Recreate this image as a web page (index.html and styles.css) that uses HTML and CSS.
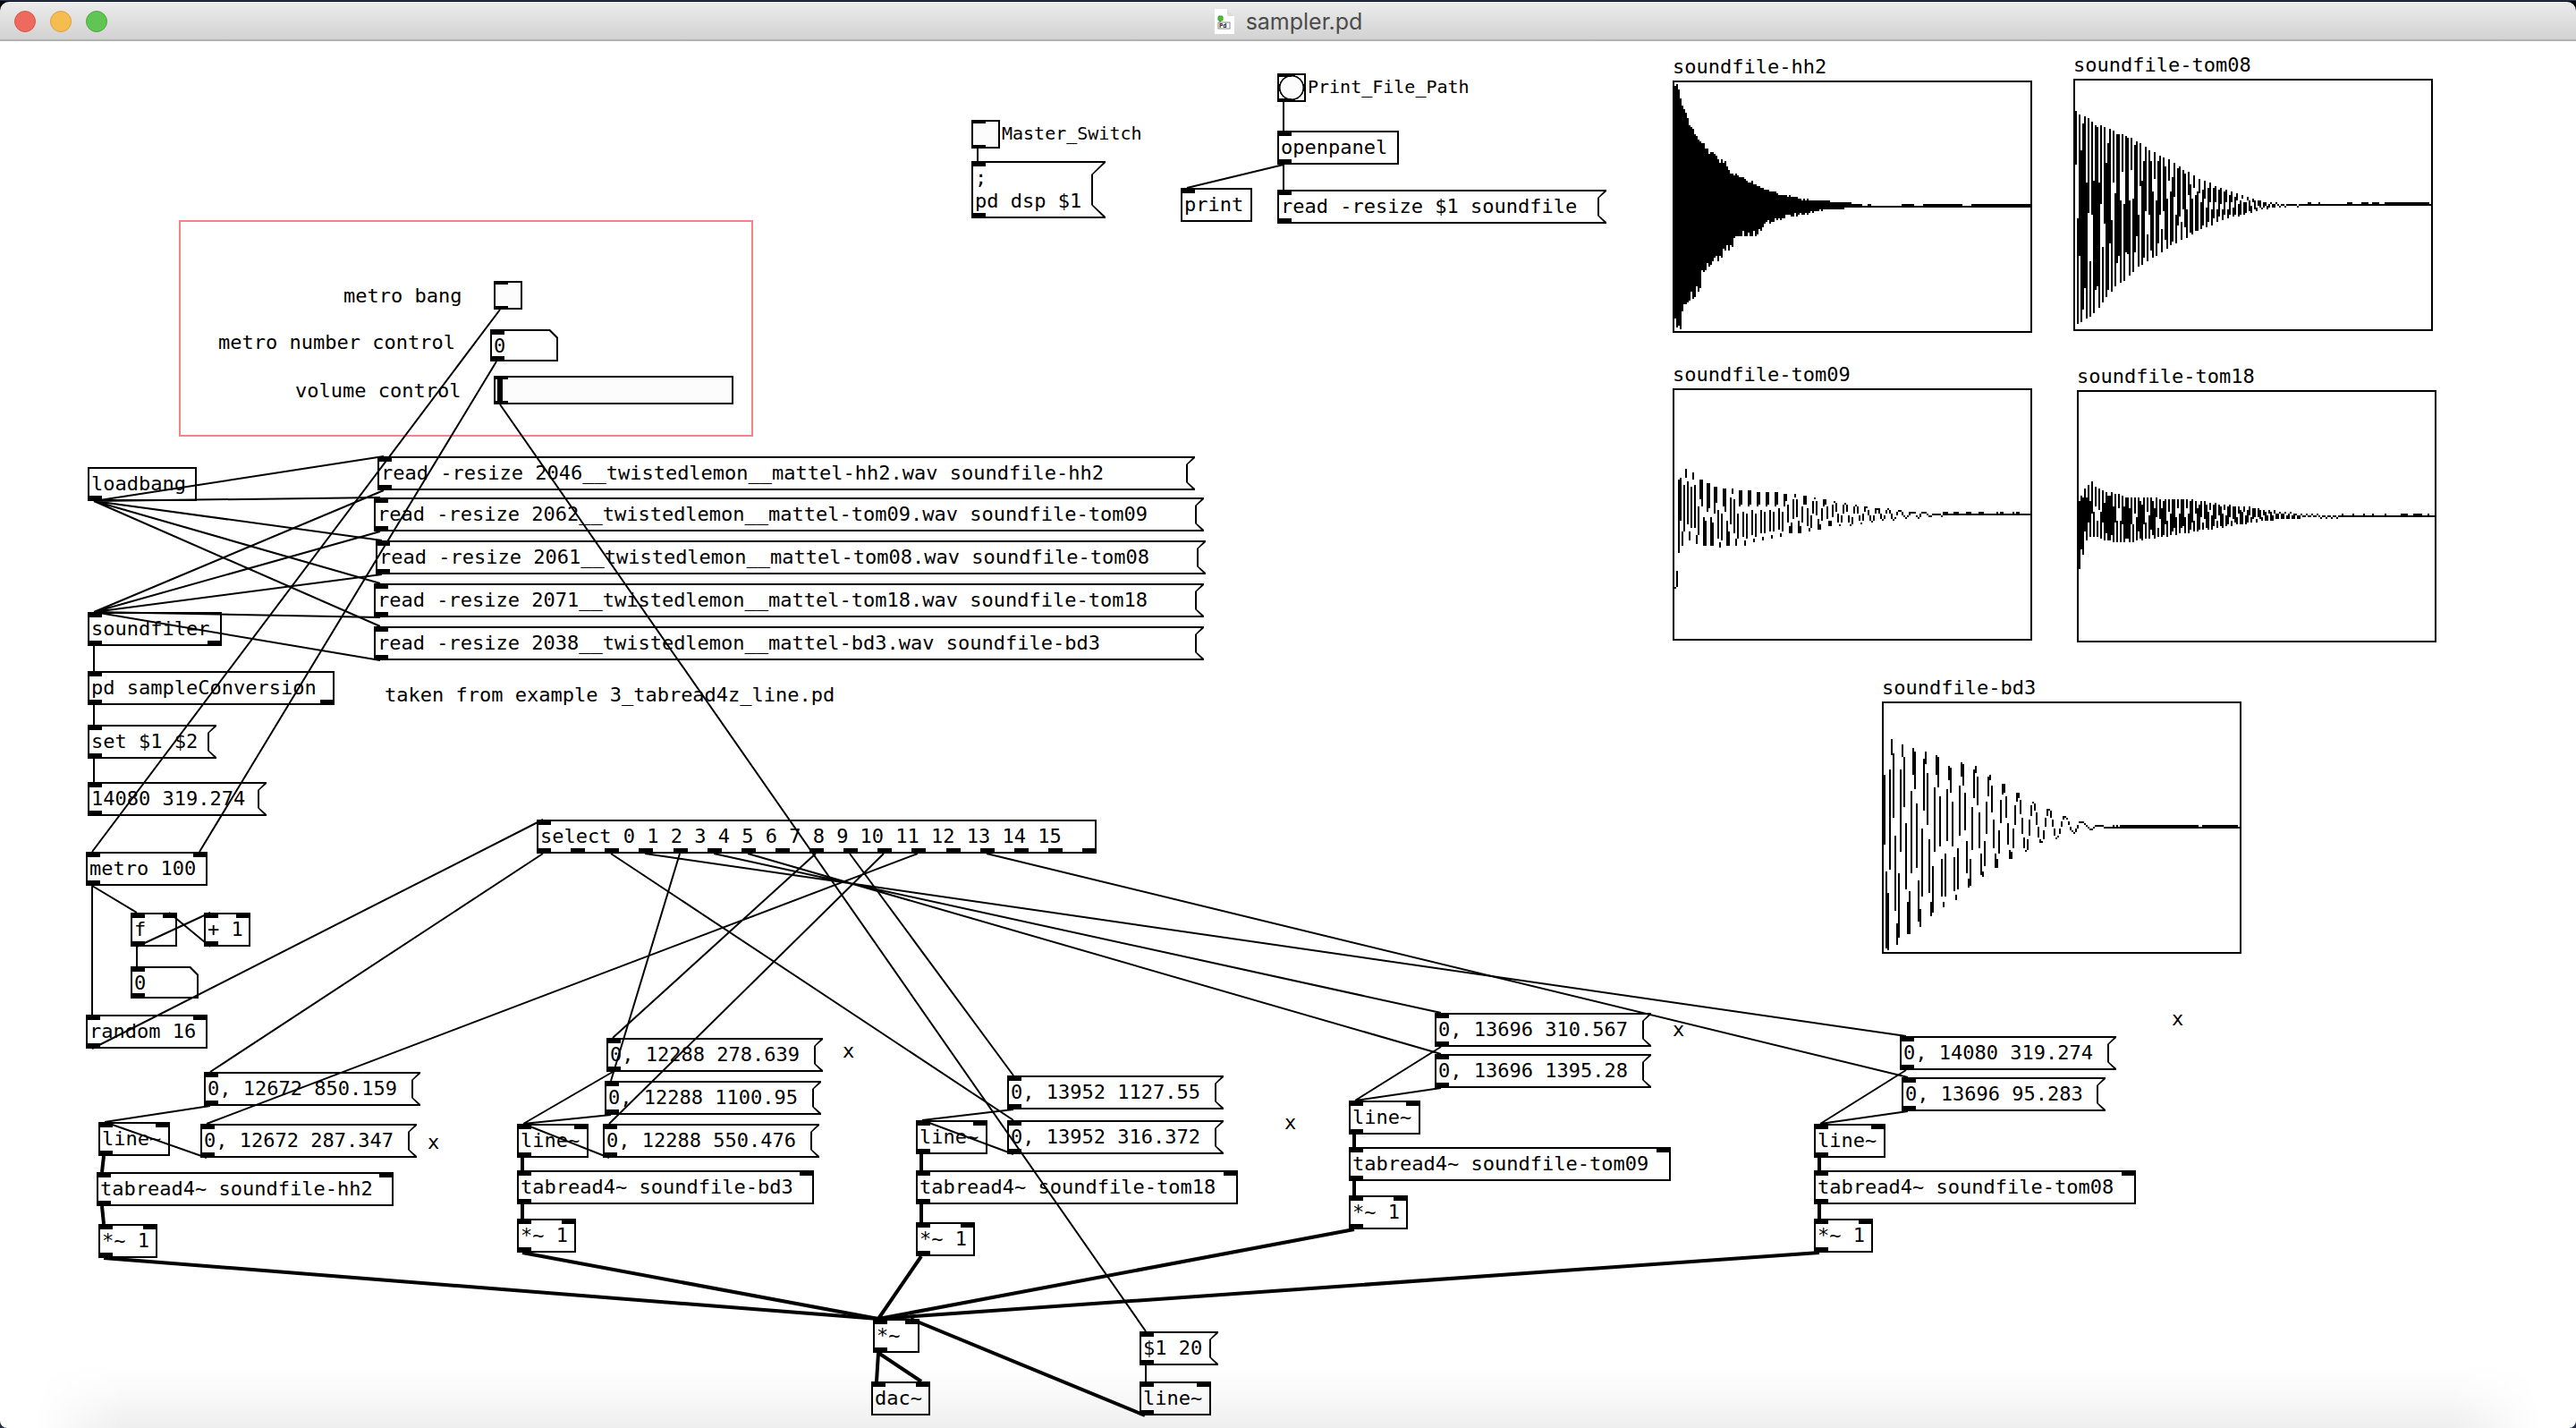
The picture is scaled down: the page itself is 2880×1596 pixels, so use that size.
FILE: index.html
```html
<!DOCTYPE html>
<html lang="en">
<head>
<meta charset="utf-8">
<title>sampler.pd</title>
<link rel="stylesheet" href="styles.css">
</head>
<body>
<div class="window">
  <header class="titlebar">
    <div class="lights">
      <button class="light close" aria-label="Close"></button>
      <button class="light minimize" aria-label="Minimize"></button>
      <button class="light zoom" aria-label="Zoom"></button>
    </div>
    <h1 class="title">
      <svg class="doc-icon" viewBox="0 0 24 28" aria-hidden="true">
        <path d="M1 0H15L23 8V28H1Z" fill="#fff"/>
        <path d="M15 0L23 8H17Q15 8 15 6Z" fill="#dcdcdc"/>
        <rect x="5" y="8" width="5" height="5" rx="1" fill="#4cc532" stroke="#2d9a1c" stroke-width="1"/>
        <path d="M7 13V15" stroke="#444" stroke-width="1"/>
        <rect x="5" y="15" width="13" height="7" fill="#fff" stroke="#888" stroke-width="1"/>
        <text x="6" y="21" class="doc-text">Pd</text>
      </svg>
      <span>sampler.pd</span>
    </h1>
  </header>

  <main class="patch">
    <div class="panel" style="--x:200;--y:246"></div>

    <label class="comment" for="metro-bang" style="--x:384;--y:318">metro bang</label>
    <label class="comment" for="metro-number" style="--x:244;--y:370">metro number control</label>
    <label class="comment" for="volume" style="--x:330;--y:424">volume control</label>
    <p class="comment" style="--x:430;--y:764">taken from example 3_tabread4z_line.pd</p>
    <p class="comment" style="--x:478;--y:1264">x</p>
    <p class="comment" style="--x:942;--y:1162">x</p>
    <p class="comment" style="--x:1436;--y:1242">x</p>
    <p class="comment" style="--x:1870;--y:1138">x</p>
    <p class="comment" style="--x:2428;--y:1126">x</p>

    <div class="gui" style="--x:552;--y:314"><input class="toggle" type="checkbox" id="metro-bang"><span class="ins"><i></i></span><span class="outs"><i></i></span></div>
    <div class="num" style="--x:548;--y:368"><input type="text" id="metro-number" value="0"><span class="ins"><i></i></span><span class="outs"><i></i></span></div>
    <div class="gui" style="--x:552;--y:420"><input class="slider" type="range" id="volume" value="0"><span class="ins"><i></i></span><span class="outs"><i></i></span></div>

    <div class="gui" style="--x:1086;--y:134"><input class="toggle" type="checkbox" id="master"><label class="gui-label" for="master">Master_Switch</label><span class="ins"><i></i></span><span class="outs"><i></i></span></div>
    <button class="msg tall" style="--x:1086;--y:180;--n:10"><span class="text">;
pd dsp $1</span><span class="ins"><i></i></span><span class="outs"><i></i></span></button>
    <div class="gui" style="--x:1428;--y:82"><button class="bang" id="print-path" aria-labelledby="print-label"></button><label class="gui-label" id="print-label" for="print-path">Print_File_Path</label><span class="ins"><i></i></span><span class="outs"><i></i></span></div>
    <div class="obj" style="--x:1428;--y:146;--n:9">openpanel<span class="ins"><i></i></span><span class="outs"><i></i></span></div>
    <div class="obj" style="--x:1320;--y:210;--n:5">print<span class="ins"><i></i></span></div>
    <button class="msg" style="--x:1428;--y:212;--n:25"><span class="text">read -resize $1 soundfile</span><span class="ins"><i></i></span><span class="outs"><i></i></span></button>

    <div class="obj" style="--x:98;--y:522;--n:8">loadbang<span class="outs"><i></i></span></div>
    <button class="msg" style="--x:422;--y:510;--n:64"><span class="text">read -resize 2046__twistedlemon__mattel-hh2.wav soundfile-hh2</span><span class="ins"><i></i></span><span class="outs"><i></i></span></button>
    <button class="msg" style="--x:418;--y:556;--n:65"><span class="text">read -resize 2062__twistedlemon__mattel-tom09.wav soundfile-tom09</span><span class="ins"><i></i></span><span class="outs"><i></i></span></button>
    <button class="msg" style="--x:420;--y:604;--n:65"><span class="text">read -resize 2061__twistedlemon__mattel-tom08.wav soundfile-tom08</span><span class="ins"><i></i></span><span class="outs"><i></i></span></button>
    <button class="msg" style="--x:418;--y:652;--n:65"><span class="text">read -resize 2071__twistedlemon__mattel-tom18.wav soundfile-tom18</span><span class="ins"><i></i></span><span class="outs"><i></i></span></button>
    <button class="msg" style="--x:418;--y:700;--n:65"><span class="text">read -resize 2038__twistedlemon__mattel-bd3.wav soundfile-bd3</span><span class="ins"><i></i></span><span class="outs"><i></i></span></button>

    <div class="obj" style="--x:98;--y:684;--n:10">soundfiler<span class="ins"><i></i></span><span class="outs"><i></i><i></i></span></div>
    <div class="obj" style="--x:98;--y:750;--n:19">pd sampleConversion<span class="ins"><i></i></span><span class="outs"><i></i><i></i></span></div>
    <button class="msg" style="--x:98;--y:810;--n:9"><span class="text">set $1 $2</span><span class="ins"><i></i></span><span class="outs"><i></i></span></button>
    <button class="msg" style="--x:98;--y:874;--n:13"><span class="text">14080 319.274</span><span class="ins"><i></i></span><span class="outs"><i></i></span></button>

    <div class="obj" style="--x:96;--y:952;--n:9">metro 100<span class="ins"><i></i><i></i></span><span class="outs"><i></i></span></div>
    <div class="obj" style="--x:146;--y:1020;--n:3">f<span class="ins"><i></i><i></i></span><span class="outs"><i></i></span></div>
    <div class="obj" style="--x:228;--y:1020;--n:3">+ 1<span class="ins"><i></i><i></i></span><span class="outs"><i></i></span></div>
    <div class="num" style="--x:146;--y:1080"><input type="text" aria-label="Counter" value="0"><span class="ins"><i></i></span><span class="outs"><i></i></span></div>
    <div class="obj" style="--x:96;--y:1134;--n:9">random 16<span class="ins"><i></i><i></i></span><span class="outs"><i></i></span></div>
    <div class="obj" style="--x:600;--y:916;--n:44">select 0 1 2 3 4 5 6 7 8 9 10 11 12 13 14 15<span class="ins"><i></i></span><span class="outs"><i></i><i></i><i></i><i></i><i></i><i></i><i></i><i></i><i></i><i></i><i></i><i></i><i></i><i></i><i></i><i></i><i></i></span></div>

    <button class="msg" style="--x:228;--y:1198;--n:16"><span class="text">0, 12672 850.159</span><span class="ins"><i></i></span><span class="outs"><i></i></span></button>
    <button class="msg" style="--x:224;--y:1256;--n:16"><span class="text">0, 12672 287.347</span><span class="ins"><i></i></span><span class="outs"><i></i></span></button>
    <div class="obj" style="--x:110;--y:1254;--n:5">line~<span class="ins"><i></i><i></i></span><span class="outs"><i></i></span></div>
    <div class="obj" style="--x:108;--y:1310;--n:23">tabread4~ soundfile-hh2<span class="ins"><i></i><i></i></span><span class="outs"><i></i></span></div>
    <div class="obj" style="--x:110;--y:1368;--n:4">*~ 1<span class="ins"><i></i><i></i></span><span class="outs"><i></i></span></div>

    <button class="msg" style="--x:678;--y:1160;--n:16"><span class="text">0, 12288 278.639</span><span class="ins"><i></i></span><span class="outs"><i></i></span></button>
    <button class="msg" style="--x:676;--y:1208;--n:16"><span class="text">0, 12288 1100.95</span><span class="ins"><i></i></span><span class="outs"><i></i></span></button>
    <button class="msg" style="--x:674;--y:1256;--n:16"><span class="text">0, 12288 550.476</span><span class="ins"><i></i></span><span class="outs"><i></i></span></button>
    <div class="obj" style="--x:578;--y:1256;--n:5">line~<span class="ins"><i></i><i></i></span><span class="outs"><i></i></span></div>
    <div class="obj" style="--x:578;--y:1308;--n:23">tabread4~ soundfile-bd3<span class="ins"><i></i><i></i></span><span class="outs"><i></i></span></div>
    <div class="obj" style="--x:578;--y:1362;--n:4">*~ 1<span class="ins"><i></i><i></i></span><span class="outs"><i></i></span></div>

    <button class="msg" style="--x:1126;--y:1202;--n:16"><span class="text">0, 13952 1127.55</span><span class="ins"><i></i></span><span class="outs"><i></i></span></button>
    <button class="msg" style="--x:1126;--y:1252;--n:16"><span class="text">0, 13952 316.372</span><span class="ins"><i></i></span><span class="outs"><i></i></span></button>
    <div class="obj" style="--x:1024;--y:1252;--n:5">line~<span class="ins"><i></i><i></i></span><span class="outs"><i></i></span></div>
    <div class="obj" style="--x:1024;--y:1308;--n:25">tabread4~ soundfile-tom18<span class="ins"><i></i><i></i></span><span class="outs"><i></i></span></div>
    <div class="obj" style="--x:1024;--y:1366;--n:4">*~ 1<span class="ins"><i></i><i></i></span><span class="outs"><i></i></span></div>

    <button class="msg" style="--x:1604;--y:1132;--n:16"><span class="text">0, 13696 310.567</span><span class="ins"><i></i></span><span class="outs"><i></i></span></button>
    <button class="msg" style="--x:1604;--y:1178;--n:16"><span class="text">0, 13696 1395.28</span><span class="ins"><i></i></span><span class="outs"><i></i></span></button>
    <div class="obj" style="--x:1508;--y:1230;--n:5">line~<span class="ins"><i></i><i></i></span><span class="outs"><i></i></span></div>
    <div class="obj" style="--x:1508;--y:1282;--n:25">tabread4~ soundfile-tom09<span class="ins"><i></i><i></i></span><span class="outs"><i></i></span></div>
    <div class="obj" style="--x:1508;--y:1336;--n:4">*~ 1<span class="ins"><i></i><i></i></span><span class="outs"><i></i></span></div>

    <button class="msg" style="--x:2124;--y:1158;--n:16"><span class="text">0, 14080 319.274</span><span class="ins"><i></i></span><span class="outs"><i></i></span></button>
    <button class="msg" style="--x:2126;--y:1204;--n:15"><span class="text">0, 13696 95.283</span><span class="ins"><i></i></span><span class="outs"><i></i></span></button>
    <div class="obj" style="--x:2028;--y:1256;--n:5">line~<span class="ins"><i></i><i></i></span><span class="outs"><i></i></span></div>
    <div class="obj" style="--x:2028;--y:1308;--n:25">tabread4~ soundfile-tom08<span class="ins"><i></i><i></i></span><span class="outs"><i></i></span></div>
    <div class="obj" style="--x:2028;--y:1362;--n:4">*~ 1<span class="ins"><i></i><i></i></span><span class="outs"><i></i></span></div>

    <div class="obj" style="--x:976;--y:1474;--n:3">*~<span class="ins"><i></i><i></i></span><span class="outs"><i></i></span></div>
    <div class="obj" style="--x:974;--y:1544;--n:4">dac~<span class="ins"><i></i><i></i></span></div>
    <button class="msg" style="--x:1274;--y:1488;--n:5"><span class="text">$1 20</span><span class="ins"><i></i></span><span class="outs"><i></i></span></button>
    <div class="obj" style="--x:1274;--y:1544;--n:5">line~<span class="ins"><i></i><i></i></span><span class="outs"><i></i></span></div>

    <figure class="array" style="--x:1870;--y:62"><figcaption>soundfile-hh2</figcaption><svg class="graph" data-wave="hh2" viewBox="0 0 402 282"></svg></figure>
    <figure class="array" style="--x:2318;--y:60"><figcaption>soundfile-tom08</figcaption><svg class="graph" data-wave="tom08" viewBox="0 0 402 282"></svg></figure>
    <figure class="array" style="--x:1870;--y:406"><figcaption>soundfile-tom09</figcaption><svg class="graph" data-wave="tom09" viewBox="0 0 402 282"></svg></figure>
    <figure class="array" style="--x:2322;--y:408"><figcaption>soundfile-tom18</figcaption><svg class="graph" data-wave="tom18" viewBox="0 0 402 282"></svg></figure>
    <figure class="array" style="--x:2104;--y:756"><figcaption>soundfile-bd3</figcaption><svg class="graph" data-wave="bd3" viewBox="0 0 402 282"></svg></figure>

    <svg class="wires" aria-hidden="true">
      <g class="control">
        <path d="M559 346L103 952M555 404L223 952M559 452L1281 1488"/>
        <path d="M1093 166V180M1435 114V146M1435 184V212M1435 184L1327 210"/>
        <path d="M105 560L429 510M105 560L425 556M105 560L427 604M105 560L425 652M105 560L425 700"/>
        <path d="M429 548L105 684M425 594L105 684M427 642L105 684M425 690L105 684M425 738L105 684"/>
        <path d="M105 722V750M105 788V810M105 848V874"/>
        <path d="M103 990V1134M103 990L153 1020M153 1058L235 1020M153 1058V1080M235 1058L189 1020M103 1172L607 916"/>
        <path d="M607 954L235 1198M683 954L1133 1252M721 954L2131 1158M760 954L683 1208M798 954L1611 1132M836 954L1611 1178"/>
        <path d="M912 954L685 1160M950 954L1133 1202M988 954L681 1256M1026 954L231 1256M1103 954L2133 1204"/>
        <path d="M235 1236L117 1254M231 1294L117 1254"/>
        <path d="M685 1198L585 1256M683 1246L585 1256M681 1294L585 1256"/>
        <path d="M1133 1240L1031 1252M1133 1290L1031 1252"/>
        <path d="M1611 1170L1515 1230M1611 1216L1515 1230"/>
        <path d="M2131 1196L2035 1256M2133 1242L2035 1256M1281 1526V1544"/>
      </g>
      <g class="signal">
        <path d="M116 1292L114 1310M114 1348L116 1368M116 1406L982 1474"/>
        <path d="M584 1294V1308M584 1346V1362M584 1400L982 1474"/>
        <path d="M1030 1290V1308M1030 1346V1366M1030 1404L982 1474"/>
        <path d="M1514 1268V1282M1514 1320V1336M1514 1374L982 1474"/>
        <path d="M2034 1294V1308M2034 1346V1362M2034 1400L982 1474"/>
        <path d="M982 1512L980 1544M982 1512L1030 1544M1280 1582L1018 1474"/>
      </g>
    </svg>
  </main>
</div>
<script src="waves.js"></script>
</body>
</html>
```

FILE: styles.css
```css
* { box-sizing: border-box; }

body {
  margin: 0;
  background: #232b45;
  font-family: "DejaVu Sans Mono", monospace;
  font-size: 22px;
  line-height: 26px;
  color: #000;
}

button, input { font: inherit; color: inherit; margin: 0; padding: 0; border: 0; border-radius: 0; }

.window {
  position: relative;
  min-height: 100vh;
  padding-top: 2px;
  overflow: hidden;
  background: linear-gradient(#2c3550 1px, #060912 1px, #060912 20px, #fff 20px);
  border-radius: 0 0 8px 8px;
}

.window::after {
  content: "";
  position: absolute;
  left: 40px;
  right: 40px;
  bottom: 0;
  height: 72px;
  background: linear-gradient(rgba(0, 0, 0, 0), rgba(0, 0, 0, 0.02) 45%, rgba(0, 0, 0, 0.065));
  mask-image: linear-gradient(90deg, transparent, #000 100px, #000 calc(100% - 100px), transparent);
  pointer-events: none;
}

/* title bar */
.titlebar {
  display: grid;
  grid-template-columns: 1fr auto 1fr;
  align-items: center;
  height: 44px;
  padding: 2px 16px 0;
  background: linear-gradient(#ececec, #d2d2d2);
  border-bottom: 2px solid #b1b1b1;
  border-radius: 10px 10px 0 0;
}

.lights { display: flex; gap: 16px; }
.light { width: 24px; height: 24px; border-radius: 50%; }
.close { background: #ee6a5f; border: 1px solid #d65448; }
.minimize { background: #f5bd4f; border: 1px solid #d9a03c; }
.zoom { background: #61c554; border: 1px solid #4fa73f; }

.title {
  display: flex;
  align-items: center;
  gap: 12px;
  margin: 0;
  font: 400 25px/30px Inter, "Liberation Sans", sans-serif;
  color: #4b4b4b;
}

.doc-icon { width: 24px; height: 28px; }
.doc-text { font: 700 7px "DejaVu Sans Mono", monospace; fill: #222; }

/* objects on the canvas, placed by their patch coordinates */
.panel, .comment, .obj, .msg, .num, .gui, .array {
  position: absolute;
  left: calc(var(--x) * 1px);
  top: calc(var(--y) * 1px);
  margin: 0;
  white-space: pre;
}

.panel { width: 642px; height: 242px; border: 2px solid #f28484; }

.obj {
  width: calc(var(--n) * 14px + 10px);
  height: 38px;
  padding: 4px 2px;
  border: 2px solid #000;
}

.msg {
  --notch: 8px;
  width: calc(var(--n) * 14px + 18px);
  height: 38px;
  padding: 6px 4px;
  text-align: left;
  background: #000;
  isolation: isolate;
  clip-path: polygon(0 0, 100% 0, 100% 2px, calc(100% - var(--notch)) calc(var(--notch) + 1px), calc(100% - var(--notch)) calc(100% - var(--notch) - 1px), 100% calc(100% - 2px), 100% 100%, 0 100%);
}

.msg::before {
  content: "";
  position: absolute;
  inset: 2px;
  z-index: -1;
  background: #fff;
  clip-path: polygon(0 0, calc(100% - 1px) 0, calc(100% - var(--notch)) calc(var(--notch) - 1px), calc(100% - var(--notch)) calc(100% - var(--notch) + 1px), calc(100% - 1px) 100%, 0 100%);
}

.msg.tall { --notch: 14px; width: 150px; height: 64px; }
.text { display: block; }

.num {
  width: 76px;
  height: 36px;
  background: #000;
  clip-path: polygon(0 0, calc(100% - 9px) 0, 100% 9px, 100% 100%, 0 100%);
}

.num input {
  display: block;
  width: 72px;
  height: 32px;
  margin: 2px;
  padding: 0 2px;
  background: #fff;
  clip-path: polygon(0 0, calc(100% - 8px) 0, 100% 8px, 100% 100%, 0 100%);
}

.ins, .outs {
  position: absolute;
  left: 0;
  right: 0;
  display: flex;
  justify-content: space-between;
  pointer-events: none;
}
.ins { top: 0; }
.outs { bottom: 0; }
.obj .ins { top: -2px; left: -2px; right: -2px; }
.obj .outs { bottom: -2px; left: -2px; right: -2px; }
.ins i, .outs i { width: 16px; height: 6px; background: #000; }
.gui .ins i, .gui .outs i { height: 4px; }

.gui { height: 32px; }
.toggle, .slider, .bang {
  display: block;
  appearance: none;
  width: 32px;
  height: 32px;
  background: #fcfcfc;
  border: 2px solid #000;
}
.slider { width: 268px; padding: 0 2px; }
.slider::-webkit-slider-thumb { appearance: none; width: 6px; height: 28px; background: #000; }
.bang { background: radial-gradient(circle closest-side, #fcfcfc 86%, #000 92%, #000 100%, #fcfcfc 102%); }
.gui-label { position: absolute; left: 34px; top: 3px; font-size: 20px; line-height: 24px; }

.array { width: 402px; }
.array figcaption { margin-bottom: 2px; }
.graph { display: block; width: 402px; height: 282px; border: 0; shape-rendering: crispEdges; }
.graph .frame { fill: none; stroke: #000; stroke-width: 2; }

.wires { position: absolute; left: 0; top: 0; width: 100%; height: 100%; pointer-events: none; }
.wires path { fill: none; stroke: #000; }
.control path { stroke-width: 2; }
.signal path { stroke-width: 4; }
```

FILE: waves.js
```js
// Draws each sample table as 2px columns running from the lowest to the
// highest value that falls in the column. "raised" lists the spans of the
// quiet tail where the line is one step thicker.

const WAVES = {
  hh2: {
    fill: 212,
    raised: [[218,222],[256,270],[280,324],[334,400]],
    top: [[1,3],[6,10],[9,22],[14,38],[20,54],[26,60],[37,76],[50,88],[58,92],[64,102],[75,108],[87,114],[97,119],[110,124],[125,128],[140,132],[160,134],[190,136],[210,138]],
    bottom: [[1,270],[8,272],[12,255],[20,242],[30,228],[33,210],[42,206],[52,195],[62,186],[76,172],[94,170],[104,160],[120,154],[135,150],[150,148],[165,145],[190,143],[210,142]]
  },
  tom08: {
    raised: [[262,266],[274,276],[306,312],[322,330],[334,342],[348,398]],
    first: 3, period: 4.47, stretch: 0.0095, end: 250,
    top: [[2,36],[26,50],[41,56],[61,64],[80,76],[109,92],[143,113],[171,124],[203,134],[216,138],[250,140]],
    bottom: [[5,275],[15,268],[23,263],[33,250],[47,232],[59,224],[73,210],[89,200],[111,186],[139,170],[163,160],[199,149],[223,144],[250,142]]
  },
  tom18: {
    raised: [[296,298],[308,310],[320,322],[330,332],[344,346],[362,370],[376,386],[392,394]],
    first: 0, period: 4.1, stretch: 0.008, end: 290,
    top: [[0,130],[6,112],[16,102],[23,110],[35,114],[46,116],[58,120],[90,121],[117,122],[140,124],[164,128],[193,131],[222,135],[252,138],[290,140]],
    bottom: [[2,200],[5,190],[9,170],[14,164],[22,164],[30,168],[40,170],[62,170],[80,166],[108,162],[140,157],[164,153],[190,149],[222,145],[252,143],[290,142]]
  },
  tom09: {
    raised: [[302,308],[314,320],[328,334],[342,348],[362,364],[366,370],[380,382],[384,388]],
    turns: [[2,223],[5,222],[8,100],[11,175],[15,90],[19,169],[23,94],[27,173],[32,102],[36,177],[40,106],[44,177],[48,110],[53,177],[58,112],[62,177],[67,112],[71,175],[76,114],[81,175],[86,114],[91,172],[96,115],[101,169],[106,116],[111,167],[116,116],[121,165],[126,118],[132,163],[137,118],[142,162],[148,120],[153,159],[159,122],[164,158],[170,124],[176,155],[181,126],[187,153],[193,128],[199,153],[205,130],[211,151],[216,132],[223,149],[229,133],[235,147],[241,134],[247,147],[254,136],[261,145],[268,137],[275,144],[281,137],[288,143],[295,139],[302,142]]
  },
  bd3: {
    raised: [[258,260],[262,264],[266,354],[358,398]],
    turns: [[2,82],[6,278],[11,42],[17.5,272],[23,48],[30,260],[35.5,52],[42.5,252],[48.5,56],[55.5,240],[61.5,60],[69,230],[75.5,72],[83,222],[89.5,68],[97.5,208],[104.5,72],[112.5,196],[120.5,82],[128,186],[136,92],[144,176],[152,102],[161,168],[169,112],[178,159],[186.5,120],[195.5,153],[204.5,128],[214.5,147],[223,133],[233.5,143],[243,137],[251,141]]
  }
};

function lerp(points, x) {
  for (let i = 1; i < points.length; i++) {
    const [x0, y0] = points[i - 1], [x1, y1] = points[i];
    if (x <= x1) return y0 + (y1 - y0) * Math.max(0, (x - x0) / (x1 - x0));
  }
  return points[points.length - 1][1];
}

function turnsOf(wave) {
  if (wave.turns) return wave.turns;
  const turns = [];
  let x = wave.first;
  while (x < wave.end) {
    const p = wave.period + wave.stretch * x;
    turns.push([x, lerp(wave.top, x)], [x + p / 2, lerp(wave.bottom, x + p / 2)]);
    x += p;
  }
  return turns;
}

function valueAt(turns, x) {
  for (let i = 1; i < turns.length; i++) {
    const [x0, y0] = turns[i - 1], [x1, y1] = turns[i];
    if (x <= x1) {
      const t = Math.max(0, (x - x0) / (x1 - x0));
      return y0 + (y1 - y0) * (1 - Math.cos(Math.PI * t)) / 2;
    }
  }
  return null;
}

function columns(wave) {
  const turns = wave.fill ? [] : turnsOf(wave);
  let d = "";
  for (let x = 2; x < 400; x += 2) {
    let lo = Infinity, hi = -Infinity;
    if (x < wave.fill) {
      const decay = Math.max(0, 1 - x / 190) * 3;
      lo = lerp(wave.top, x) + Math.sin(x * x * 0.7) * decay;
      hi = lerp(wave.bottom, x) + Math.sin(x * x * 1.3) * decay * 2;
    } else {
      for (let s = 1; s <= 14; s++) {
        const v = valueAt(turns, x + s / 8);
        if (v !== null) { lo = Math.min(lo, v); hi = Math.max(hi, v); }
      }
    }
    if (lo === Infinity) {
      lo = wave.raised.some(([a, b]) => x >= a && x < b) ? 138 : 140;
      hi = 142;
    }
    lo = Math.round(lo / 2) * 2;
    hi = Math.max(lo + 2, Math.round(hi / 2) * 2);
    d += `M${x} ${lo}h2V${hi}h-2z`;
  }
  return d;
}

const NS = "http://www.w3.org/2000/svg";
for (const svg of document.querySelectorAll("[data-wave]")) {
  const frame = document.createElementNS(NS, "path");
  frame.setAttribute("class", "frame");
  frame.setAttribute("d", "M1 1H401V281H1Z");
  const path = document.createElementNS(NS, "path");
  path.setAttribute("d", columns(WAVES[svg.dataset.wave]));
  svg.append(frame, path);
}
```
